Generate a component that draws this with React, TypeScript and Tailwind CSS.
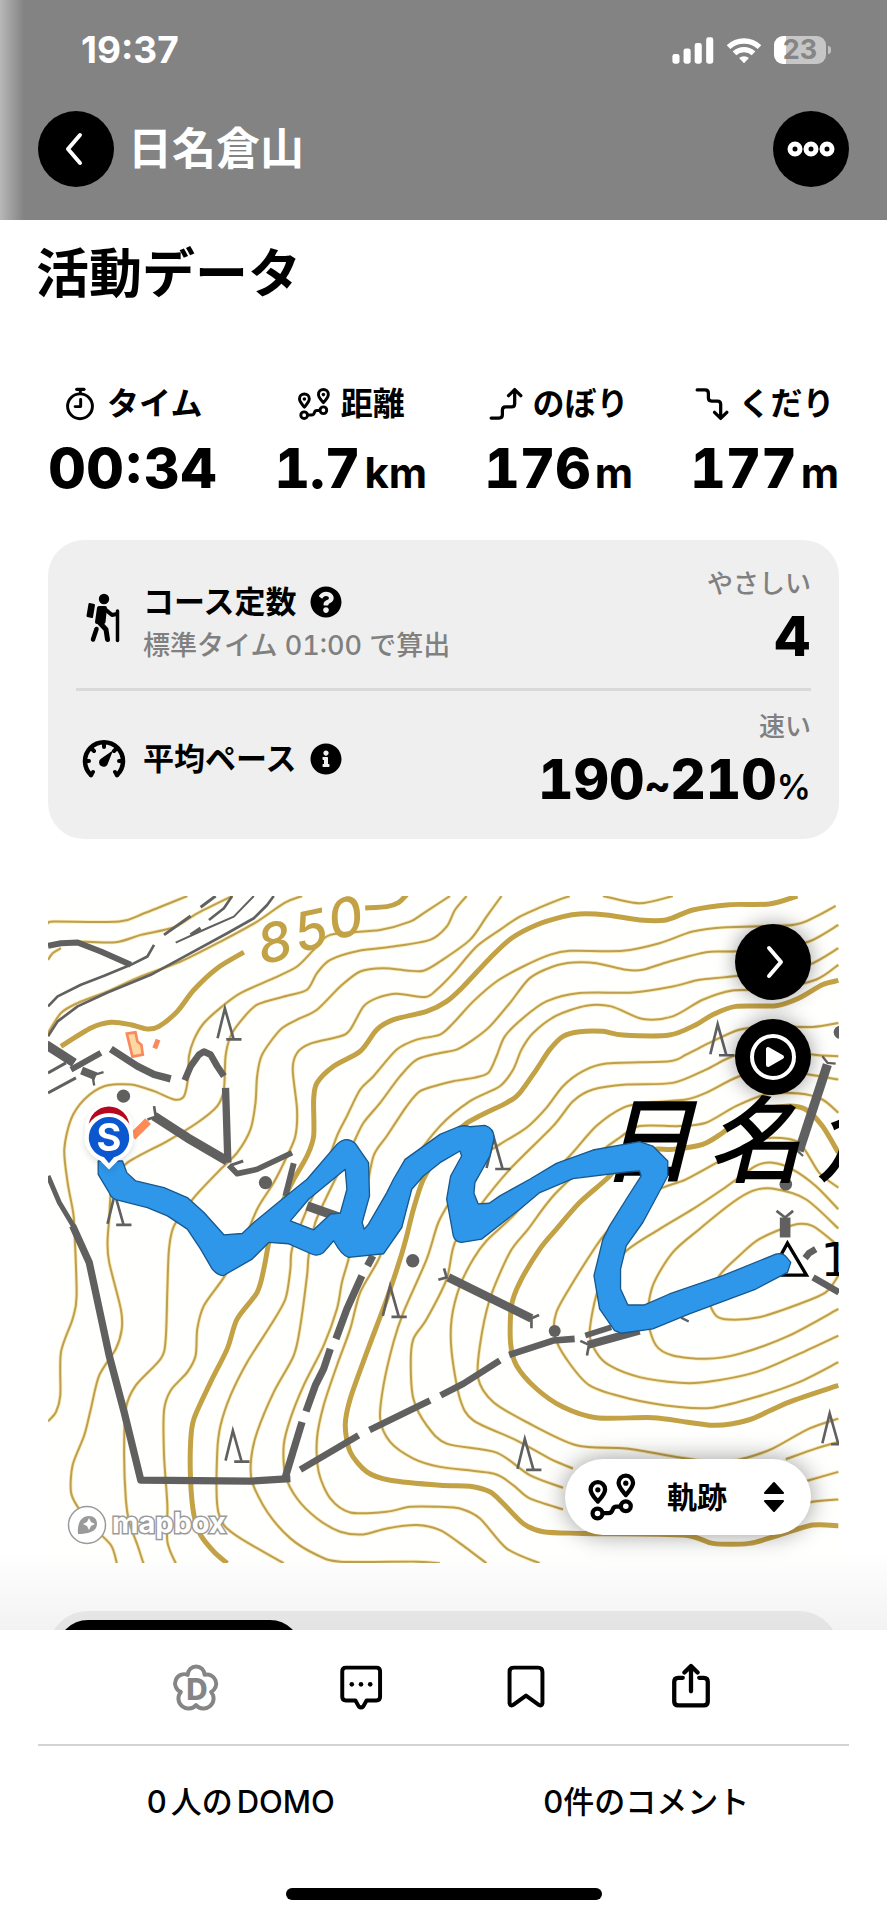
import type { ReactNode } from "react";
import { FaInfoCircle, FaQuestionCircle } from "react-icons/fa";

/* ---------- Map data ---------- */

const THIN_CONTOURS = [
  "21,100 40,95 235,95 310,70 440,18",
  "110,155 225,157 300,135 400,112 470,70 575,18",
  "21,210 35,190 60,175",
  "21,430 60,370 110,340 200,305 300,260 420,215 540,155 650,95 730,40 785,18",
  "1280,18 1245,60 1220,110 1170,150 1060,170 960,182 870,210 830,250 800,300 740,318 650,345 600,395 570,440 555,500 550,600 530,650 470,700 380,755 260,820 215,880 205,990 200,1060 205,1120 240,1260 243,1320 225,1380 175,1460 150,1560 130,1640 95,1730 90,1810 110,1855 150,1910 210,1970 228,2025",
  "1230,18 1150,70 1110,95 1020,120 870,135 820,180 770,230 700,265 600,310 545,350 490,400 460,450 445,500 443,560 430,620 400,630 340,605 270,585 190,590 130,630 90,690 70,780 80,880 95,960 100,1010 107,1220 95,1290 60,1390 58,1520 45,1570 21,1598",
  "1385,18 1340,80 1290,150 1200,215 1150,243 1100,242 1030,235 960,245 900,290 830,360 770,390 720,420 665,495 650,560 645,640 630,720 590,790 540,840 460,925 400,1010 385,1080 380,1200 375,1350 360,1410 285,1490 255,1560 250,1700 255,1830 265,1900 290,1970 308,2025",
  "1590,18 1530,40 1440,80 1380,120 1310,170 1240,250 1190,300 1155,322 1070,312 1010,325 970,350 930,420 900,440 810,462 770,490 757,540 770,660 765,740 740,800 700,880 650,960 600,1080 548,1168 490,1250 470,1320 465,1400 440,1450 390,1505 370,1565 370,1700 380,1850 380,1960 405,2025",
  "1690,18 1800,40 1900,18",
  "2390,48 2330,80 2260,105 2060,112 1960,125 1860,160 1750,183 1590,183 1530,195 1450,230 1370,275 1300,335 1240,400 1200,435 1130,450 1070,480 1000,560 960,600 920,680 890,740 850,850 800,960 755,1080 750,1140 735,1230 690,1310 620,1420 570,1520 540,1610 530,1690 530,1850 550,1910 600,1950 730,2025",
  "2398,105 2310,155 2200,178 2070,185 2000,187 1890,215 1810,240 1760,240 1670,220 1600,218 1540,230 1470,265 1410,340 1350,410 1300,450 1250,480 1200,490 1130,510 1080,560 1020,640 970,700 940,760 870,900 825,1000 805,1100 800,1160 780,1310 760,1400 700,1510 650,1630 632,1710 635,1780 680,1870 750,1950 830,2000 900,2020 1130,2020 1200,2025",
  "2398,175 2310,225 2200,245 2060,262 1980,270 1900,290 1780,308 1620,310 1520,335 1450,385 1395,440 1370,500 1345,550 1300,565 1240,575 1200,585 1140,605 1100,650 1040,740 1000,800 975,920 940,1040 925,1110 905,1180 890,1260 850,1370 790,1490 750,1590 730,1670 735,1760 770,1830 830,1890 900,1930 970,1938 1040,1920 1130,1910 1200,1925 1260,1965 1340,2025",
  "2398,225 2330,270 2200,300 2080,302 1990,330 1900,380 1810,388 1715,350 1640,348 1550,378 1480,430 1445,480 1420,540 1380,590 1290,635 1200,710 1110,830 1060,960 1020,1100 960,1210 930,1320 890,1430 850,1550 830,1650 835,1750 870,1830 930,1872 1040,1870 1110,1855 1200,1855 1260,1860 1320,1890 1400,1980 1500,2025",
  "2398,400 2320,412 2200,410 2100,420 2010,460 1940,495 1890,515 1700,522 1630,545 1570,590 1520,655 1460,715 1380,765 1300,820 1240,920 1195,1000 1160,1110 1090,1270 1060,1360 1030,1490 1020,1590 1050,1660 1120,1710 1200,1735 1360,1755 1420,1790 1470,1830 1570,1863",
  "2398,500 2320,495 2200,470 2080,500 2000,540 1900,580 1760,585 1660,600 1600,635 1540,710 1410,840 1320,950 1245,1060 1220,1170 1160,1290 1120,1350 1112,1420 1120,1530 1160,1610 1220,1665 1370,1692 1470,1760 1570,1798",
  "2398,570 2310,555 2200,540 2100,560 2000,610 1940,630 1820,640 1750,655 1670,710 1590,800 1500,890 1420,980 1340,1055 1300,1110 1260,1190 1235,1290 1235,1390 1260,1530 1300,1595 1430,1655 1530,1710 1600,1740",
  "2398,670 2350,630 2280,612 2180,615 2090,650 2000,700 1920,710 1800,710 1740,745 1680,790 1545,915 1465,1020 1410,1090 1350,1230 1320,1370 1315,1470 1360,1540 1460,1600 1610,1670 1760,1680 1930,1708 2040,1722 2120,1708 2200,1680 2310,1620 2398,1590",
  "2398,895 2340,850 2280,760 2200,745 2140,760 2050,810 1940,870 1870,895 1780,940 1700,1030 1670,1070 1600,1180 1550,1270 1545,1340 1580,1410 1650,1490 1770,1530 1920,1555 2020,1557 2150,1525 2280,1480 2398,1420",
  "2398,960 2330,890 2260,840 2200,820 2150,830 2050,900 1960,960 1860,1020 1755,1090 1680,1190 1650,1330 1670,1390 1710,1430 1800,1465 1920,1482 2000,1480 2150,1450 2280,1395 2398,1340",
  "2398,1018 2300,930 2200,898 2140,905 2080,940 1980,1020 1900,1090 1840,1190 1825,1290 1850,1370 1900,1400 2000,1410 2100,1395 2250,1340 2398,1260",
  "2398,1070 2320,1010 2260,1008 2160,1050 2100,1100 2040,1160 2010,1230 2030,1280 2070,1292 2160,1285 2280,1245 2360,1210 2398,1160",
  "2398,1660 2330,1680 2240,1712",
  "2398,1750 2310,1775 2220,1800",
  "2398,1833 2320,1840 2220,1870",
];

const THICK_CONTOURS = [
  "60,470 150,415 210,398 270,405 320,418 355,410 410,365 460,300 530,235 610,187",
  "975,54 1040,50 1075,38 1100,14",
  "2275,18 2190,42 2070,44 1960,60 1880,90 1800,90 1700,75 1620,72 1570,80 1490,105 1415,145 1350,205 1270,290 1220,335 1160,365 1060,390 1010,420 960,485 880,530 830,580 820,630 820,740 800,800 760,870 730,930 700,1000 685,1060 670,1140 650,1210 590,1290 560,1380 510,1480 460,1590 450,1660 450,1780 460,1880 480,1940 520,1990 560,2025",
  "2398,272 2350,285 2280,325 2210,348 2090,350 2020,375 1970,405 1890,436 1750,436 1690,425 1620,426 1570,440 1530,480 1490,540 1440,610 1400,640 1275,705 1200,790 1150,870 1120,960 1100,1040 1080,1110 1040,1230 980,1390 930,1530 915,1610 930,1690 980,1750 1050,1775 1200,1790 1290,1793 1350,1810 1390,1845 1450,1905 1510,1930 1630,1935 1930,1940 2020,1965 2130,1965 2220,1940 2320,1910 2398,1912",
  "2398,790 2350,710 2300,660 2240,650 2130,670 2050,730 1990,765 1900,780 1840,780 1760,810 1700,870 1620,940 1550,1020 1500,1080 1440,1180 1415,1250 1412,1360 1430,1430 1490,1500 1570,1555 1670,1587 1840,1587 1940,1600 2020,1610 2080,1605 2140,1590 2250,1540 2398,1490",
];

const ROADS: [number, string][] = [
  [8, "21,350 50,320 120,285 190,258 270,225 320,200 340,165"],
  [8, "21,440 50,395 110,350 200,308 330,255 450,190 560,130 640,85 680,45 700,18"],
  [6, "405,158 500,115 580,80 640,18"],
  [10, "450,135 480,115"],
  [9, "370,135 450,78"],
  [9, "480,52 525,18"],
  [8, "505,90 550,55 575,18"],
  [18, "21,168 60,160 110,158 180,185 270,225"],
  [28, "15,465 100,520"],
  [18, "90,540 180,490"],
  [9, "21,550 75,520"],
  [9, "21,610 105,565"],
  [24, "122,543 165,560"],
  [7, "160,556 188,548"],
  [7, "155,560 160,588"],
  [22, "210,478 290,530 340,555 390,568"],
  [20, "432,572 450,530 475,495 490,486 510,495 530,530 550,560"],
  [22, "555,595 562,820"],
  [28, "340,680 440,745 560,815"],
  [8, "340,650 345,682 320,690"],
  [17, "565,828 590,853 650,840 755,790"],
  [9, "570,828 608,815"],
  [18, "760,822 735,920"],
  [28, "800,950 900,985"],
  [15, "21,860 55,940 100,1015"],
  [22, "95,1010 145,1120 205,1400 250,1570 300,1775 630,1778 750,1770"],
  [22, "735,1765 785,1600"],
  [22, "797,1568 825,1490 850,1440 870,1380"],
  [22, "887,1350 920,1260 965,1160"],
  [22, "982,1130 998,1100"],
  [20, "780,1743 955,1640"],
  [20, "988,1624 1170,1535"],
  [20, "1202,1520 1270,1485 1380,1415"],
  [20, "1408,1398 1540,1355 1605,1350"],
  [26, "1225,1165 1475,1288"],
  [8, "1195,1172 1220,1165 1212,1138"],
  [8, "1498,1278 1475,1288 1475,1318"],
  [17, "1637,1340 1715,1315"],
  [24, "1645,1368 1800,1325"],
  [8, "1622,1356 1648,1368 1642,1400"],
  [7, "1925,1286 1948,1298"],
  [28, "2365,525 2280,785"],
  [7, "2350,500 2366,520 2390,522"],
  [7, "2270,780 2292,800"],
  [32, "2238,985 2238,1045"],
  [8, "2212,965 2238,985 2262,965"],
  [20, "2298,1107 2310,1092 2330,1080"],
  [20, "2322,1165 2400,1210"],
];

const CONIFERS: [number, number][] = [
  [553, 350],
  [222, 908],
  [2035, 398],
  [1362, 740],
  [1050, 1185],
  [577, 1620],
  [1455, 1645],
  [2372, 1568],
];

const ROCKS: [number, number, number][] = [
  [248, 620, 20],
  [675, 880, 20],
  [1118, 1115, 20],
  [2240, 885, 19],
  [2404, 428, 20],
  [1545, 1326, 18],
];

const TRACK =
  "M172,815 L245,815 L258,850 L285,875 L370,895 L440,925 L490,970 L550,1037 L605,1033 L640,1000 L725,930 L800,870 L890,765 Q918,738 945,762 L985,820 L988,920 L966,1000 L972,1020 L985,1005 L1040,910 L1060,870 L1095,810 L1200,735 L1255,712 Q1275,706 1290,712 L1335,708 Q1365,718 1362,750 L1350,800 L1305,880 L1302,912 L1315,944 L1348,942 L1380,920 L1470,870 L1550,822 L1660,782 L1800,757 L1840,770 L1885,815 L1885,860 L1810,1000 L1760,1070 L1743,1140 L1743,1200 L1765,1248 L1815,1248 L1890,1215 L2050,1160 L2210,1095 Q2230,1090 2240,1102 L2255,1120 L2245,1150 L2150,1200 L1950,1275 L1840,1320 L1745,1333 L1725,1325 L1680,1260 L1663,1160 L1690,1050 L1710,1010 L1760,930 L1805,860 L1800,845 L1760,848 L1600,868 L1500,910 L1440,960 L1370,1015 L1325,1050 L1265,1060 Q1245,1058 1240,1040 L1220,930 L1232,860 L1265,800 L1260,785 L1200,820 L1150,860 L1115,900 L1085,1015 L1030,1094 L925,1105 Q905,1100 880,1055 L850,1090 Q830,1104 812,1094 L745,1064 L685,1060 L635,1110 L548,1160 Q530,1158 515,1140 L480,1080 L440,1020 L380,980 L320,955 L240,935 Q210,930 205,910 L172,855 Z M915,840 L920,900 L900,972 L870,975 L820,1022 L750,995 L805,930 Z";

/** Turns a list of "x,y" pairs into a smooth Catmull-Rom path. */
function smooth(list: string): string {
  const p = list.split(" ").map((s) => s.split(",").map(Number));
  let d = `M${p[0][0]},${p[0][1]}`;
  for (let i = 0; i < p.length - 1; i++) {
    const a = p[i - 1] ?? p[i];
    const b = p[i];
    const c = p[i + 1];
    const e = p[i + 2] ?? c;
    const k = 7;
    d += `C${b[0] + (c[0] - a[0]) / k},${b[1] + (c[1] - a[1]) / k} ${c[0] - (e[0] - b[0]) / k},${c[1] - (e[1] - b[1]) / k} ${c[0]},${c[1]}`;
  }
  return d;
}

function TopoMap() {
  return (
    <svg viewBox="21 18 2379 2007" className="block h-full w-full" role="img" aria-label="日名倉山">
      <rect x="21" y="18" width="2379" height="2007" fill="#fffffe" />
      <g fill="none">
        {THIN_CONTOURS.map((c) => (
          <path key={c} d={smooth(c)} stroke="#fbe9b0" strokeWidth="11" />
        ))}
        {THIN_CONTOURS.map((c) => (
          <path key={c} d={smooth(c)} stroke="#bd9f52" strokeWidth="6" />
        ))}
        {THICK_CONTOURS.map((c) => (
          <path key={c} d={smooth(c)} stroke="#c3a145" strokeWidth="15" />
        ))}
      </g>
      <g fill="#c3a145" fontSize="162" fontWeight="500" fontStyle="italic" className="font-[Inter]">
        <text transform="translate(664 224) rotate(-12)">8</text>
        <text transform="translate(774 188) rotate(-12)">5</text>
        <text transform="translate(876 150) rotate(-12)">0</text>
      </g>
      <path d="M258,432 L284,428 L290,456 L302,466 L306,495 L275,501 Z" fill="#fcd9a0" stroke="#f9895e" strokeWidth="8" />
      <path d="M342,476 L352,450" stroke="#f9895e" strokeWidth="15" />
      <path d="M275,742 L322,695" stroke="#ff8a55" strokeWidth="24" />
      <g fill="none" stroke="#606060">
        {ROADS.map(([w, pts]) => (
          <polyline key={pts} points={pts} strokeWidth={w} strokeLinejoin="round" />
        ))}
        {CONIFERS.map(([x, y]) => (
          <path
            key={x}
            d={`M${x - 22},${y + 96} L${x},${y + 6} L${x + 26},${y + 98} M${x + 4},${y + 99} H${x + 50}`}
            strokeWidth="8"
          />
        ))}
      </g>
      {ROCKS.map(([x, y, r]) => (
        <circle key={x} cx={x} cy={y} r={r} fill="#606060" />
      ))}
      <g fontSize="284" fontStyle="italic" fontWeight="500" fill="#000" className="font-['Noto_Sans_CJK_JP']">
        <text x="1680" y="858">日</text>
        <text x="2004" y="858">名</text>
        <text x="2328" y="858">倉</text>
      </g>
      <text x="2344" y="1160" fontSize="140" fill="#000" className="font-['DejaVu_Sans']">1</text>
      <path d="M2245,1062 L2302,1158 L2192,1158 Z" fill="#fff" stroke="#000" strokeWidth="10" />
      <path d={TRACK} fill="#2e97ea" fillRule="evenodd" stroke="#17588f" strokeWidth="4" strokeLinejoin="round" />
    </svg>
  );
}

function StartPin() {
  return (
    <svg viewBox="0 0 54 68" className="h-[68px] w-[54px] drop-shadow-md" aria-label="スタート地点">
      <circle cx="27" cy="25" r="24" fill="#fff" />
      <circle cx="27" cy="24" r="20.500" fill="#b5081c" />
      <path d="M27 10 a24.500 24.500 0 0 1 24.500 24.500 c0 12-8 19-15.500 23 l-9 9 -9-9 C10.500 53.500 2.500 46.500 2.500 34.500 A24.500 24.500 0 0 1 27 10z" fill="#fff" />
      <path d="M27 14a20.500 20.500 0 0 1 5 40.300l-5 6-5-6a20.500 20.500 0 0 1 5-40.300z" fill="#0a57cf" />
      <text x="27" y="48" textAnchor="middle" fontSize="38" fontWeight="700" fill="#fff" className="font-[Inter]">S</text>
    </svg>
  );
}

/* ---------- Icons ---------- */

function RouteIcon({ className }: { className: string }) {
  return (
    <svg viewBox="436 762 150 152" className={className} fill="none" stroke="currentColor" strokeWidth="13" strokeLinejoin="round" aria-hidden="true">
      <path d="M468 852 C456 838 446 828 446 815 A22 22 0 0 1 490 815 C490 828 480 838 468 852Z" />
      <path d="M553 832 C541 818 531 808 531 795 A22 22 0 0 1 575 795 C575 808 565 818 553 832Z" />
      <circle cx="468" cy="816" r="8" fill="currentColor" stroke="none" />
      <circle cx="553" cy="796" r="8" fill="currentColor" stroke="none" />
      <circle cx="467" cy="888" r="15" />
      <circle cx="553" cy="866" r="15" />
      <path d="M484 887 H500 C520 887 506 867 524 867 H537" />
    </svg>
  );
}

function StopwatchIcon({ className }: { className: string }) {
  return (
    <svg viewBox="28 30 100 104" className={className} fill="none" stroke="currentColor" strokeWidth="9" strokeLinecap="round" strokeLinejoin="round" aria-hidden="true">
      <circle cx="78" cy="89" r="38" />
      <path d="M68 37 H90" strokeWidth="10" />
      <path d="M79 40 V50 M80 68 V90 H63" />
    </svg>
  );
}

function ClimbIcon({ className }: { className: string }) {
  return (
    <svg viewBox="0 0 94 94" className={className} fill="none" stroke="currentColor" strokeWidth="9" strokeLinecap="round" strokeLinejoin="round" aria-hidden="true">
      <path d="M6 86 H28 Q37 86 37 77 V64 Q37 55 46 55 H62 Q71 55 71 46 V8 M54 24 L71 7 L88 24" />
    </svg>
  );
}

function DescendIcon({ className }: { className: string }) {
  return (
    <svg viewBox="0 0 94 94" className={className} fill="none" stroke="currentColor" strokeWidth="9" strokeLinecap="round" strokeLinejoin="round" aria-hidden="true">
      <path d="M6 8 H28 Q37 8 37 17 V30 Q37 39 46 39 H62 Q71 39 71 48 V86 M54 70 L71 87 L88 70" />
    </svg>
  );
}

function HikerIcon({ className }: { className: string }) {
  return (
    <svg viewBox="0 0 36 50" className={className} fill="none" stroke="currentColor" strokeLinecap="round" strokeLinejoin="round" aria-hidden="true">
      <circle cx="18" cy="6" r="5.200" fill="currentColor" stroke="none" />
      <path d="M3.500 11 L8 12 L6 24 L1.500 23 Z" fill="currentColor" strokeWidth="2" />
      <path d="M13 15 L19 15 L17.500 29 L11 29 Z" fill="currentColor" strokeWidth="4" />
      <path d="M20 17 L26 22 L31 21" strokeWidth="4" />
      <path d="M31.500 18 V47.500" strokeWidth="3.500" />
      <path d="M13 29 L20 36.500 L21.500 46.500" strokeWidth="5" />
      <path d="M10.500 36 L7 46.500" strokeWidth="4.500" />
    </svg>
  );
}

function GaugeIcon({ className }: { className: string }) {
  return (
    <svg viewBox="0 0 44 40" className={className} fill="none" stroke="currentColor" strokeLinecap="round" aria-hidden="true">
      <path d="M9 36 A19 19 0 1 1 35 36" strokeWidth="4.500" />
      <path d="M22 4 V8 M9 9 L12 12 M35 9 L32 12 M3 22 H7 M41 22 H37 M9 36 L11 33 M35 36 L33 33" strokeWidth="4" />
      <path d="M29 14 L25 24 A3.500 3.500 0 1 1 19.500 20.500 Z" fill="currentColor" strokeWidth="2" />
    </svg>
  );
}

function SignalIcon() {
  return (
    <svg viewBox="95 50 124 80" className="h-[27px] w-[42px]" fill="#fff" aria-hidden="true">
      <rect x="96" y="100" width="21" height="29" rx="7" />
      <rect x="129" y="84" width="21" height="45" rx="7" />
      <rect x="162" y="68" width="21" height="61" rx="7" />
      <rect x="196" y="51" width="21" height="78" rx="7" />
    </svg>
  );
}

function WifiIcon() {
  return (
    <svg viewBox="254 49 108 82" className="h-[27px] w-9" aria-hidden="true">
      <g fill="none" stroke="#fff" strokeWidth="16">
        <path d="M261 80 A68 68 0 0 1 355 80" />
        <path d="M279 99 A42 42 0 0 1 337 99" />
      </g>
      <path d="M308 129 L293 113 A22 22 0 0 1 323 113 Z" fill="#fff" />
    </svg>
  );
}

function DomoIcon() {
  return (
    <svg viewBox="36 186 146 146" className="size-12" aria-hidden="true">
      <path
        d="M84 222 A25.500 25.500 0 0 1 135 222 A28 28 0 0 1 155 274 A29 29 0 0 1 109 314 A29 29 0 0 1 63 274 A28 28 0 0 1 84 222Z"
        fill="none" stroke="#858585" strokeWidth="12" strokeLinejoin="round"
      />
      <text x="112" y="298" textAnchor="middle" fontSize="90" fontWeight="800" fill="#858585" className="font-[Inter]">D</text>
    </svg>
  );
}

function CommentIcon() {
  return (
    <svg viewBox="530 188 146 146" className="size-12" fill="none" stroke="#000" strokeWidth="12" strokeLinejoin="round" aria-hidden="true">
      <path d="M557 202 H650 Q661 202 661 213 V291 Q661 302 650 302 H620 L610 320 Q603 326 596 320 L586 302 H557 Q546 302 546 291 V213 Q546 202 557 202Z" />
      <g fill="#000" stroke="none">
        <circle cx="575" cy="253" r="7" />
        <circle cx="603" cy="253" r="7" />
        <circle cx="631" cy="253" r="7" />
      </g>
    </svg>
  );
}

function BookmarkIcon() {
  return (
    <svg viewBox="1025 188 146 146" className="size-12" fill="none" stroke="#000" strokeWidth="12" strokeLinejoin="round" aria-hidden="true">
      <path d="M1061 202 H1135 Q1148 202 1148 215 V311 Q1146 320 1138 316 L1098 287 L1058 316 Q1050 320 1048 311 V215 Q1048 202 1061 202Z" />
    </svg>
  );
}

function ShareIcon() {
  return (
    <svg viewBox="0 0 146 146" className="size-12" fill="none" stroke="#000" strokeWidth="13" strokeLinecap="round" strokeLinejoin="round" aria-hidden="true">
      <path d="M48 45 H34 Q22 45 22 57 V117 Q22 129 34 129 H112 Q124 129 124 117 V57 Q124 45 112 45 H98" />
      <path d="M73 86 V12 M53 29 L73 9 L93 29" />
    </svg>
  );
}

/* ---------- Parts ---------- */

function Stat({ icon, label, value, unit }: { icon: ReactNode; label: string; value: string; unit?: string }) {
  return (
    <div className="flex flex-col items-center gap-3">
      <dt className="flex h-10 items-center gap-[10px] text-[32px] font-bold leading-10">
        {icon}
        {label}
      </dt>
      <dd className="flex items-baseline gap-1 text-[55px] font-extrabold leading-[64px]">
        {unit ? <span className="tabular-nums">{value}</span> : value}
        {unit && <span className="text-[42px] font-bold leading-none">{unit}</span>}
      </dd>
    </div>
  );
}

const roundButton = "flex size-[76px] items-center justify-center rounded-full bg-black text-white";

export default function App() {
  return (
    <div className="flex h-screen flex-col overflow-hidden bg-white font-[Inter,'Noto_Sans_CJK_JP',sans-serif] text-black">
      <header className="relative bg-[#838383] px-[38px] pb-[33px] pt-[30px] text-white">
        <div className="absolute inset-y-0 left-0 w-6 bg-linear-to-r from-[#b8b8b8] to-[#838383]" />
        <div className="flex h-10 items-center justify-between pl-[43px] pr-[18px]">
          <span className="text-[37px] font-bold leading-10">19:37</span>
          <div className="flex items-center gap-3">
            <SignalIcon />
            <WifiIcon />
            <div className="flex items-center gap-[2px]">
              <div className="flex h-7 w-[52px] items-center justify-center rounded-[9px] bg-linear-to-r from-white from-[23%] to-[#c6c6c6] to-[23%] text-[27px] font-bold leading-7 text-[#858585]">
                23
              </div>
              <div className="h-2 w-[3px] rounded-r-full bg-[#c0c0c0]" />
            </div>
          </div>
        </div>
        <div className="mt-[41px] flex items-center">
          <button type="button" aria-label="戻る" className={roundButton}>
            <svg viewBox="0 0 24 34" className="h-[34px] w-6" fill="none" stroke="#fff" strokeWidth="4" strokeLinecap="round" strokeLinejoin="round">
              <path d="M16 3 L4 17 L16 31" />
            </svg>
          </button>
          <h1 className="ml-[14px] flex-1 text-[44px] font-bold leading-[60px]">日名倉山</h1>
          <button type="button" aria-label="メニュー" className={roundButton}>
            <svg viewBox="0 0 48 16" className="h-4 w-12" fill="none" stroke="#fff" strokeWidth="5">
              <circle cx="8" cy="8" r="5" />
              <circle cx="24" cy="8" r="5" />
              <circle cx="40" cy="8" r="5" />
            </svg>
          </button>
        </div>
      </header>

      <main className="relative min-h-0 flex-1 overflow-hidden px-12 pt-[22px]">
        <h2 className="-ml-3 text-[53px] font-bold leading-[64px]">活動データ</h2>

        <dl className="mt-[78px] flex justify-between">
          <Stat icon={<StopwatchIcon className="h-[34px] w-[34px]" />} label="タイム" value="00:34" />
          <Stat icon={<RouteIcon className="size-[34px]" />} label="距離" value="1.7" unit="km" />
          <Stat icon={<ClimbIcon className="size-[34px]" />} label="のぼり" value="176" unit="m" />
          <Stat icon={<DescendIcon className="size-[34px]" />} label="くだり" value="177" unit="m" />
        </dl>

        <section className="mt-10 rounded-[36px] bg-[#efefef] px-7">
          <div className="flex items-center pb-[22px] pt-[26px]">
            <div className="flex w-[67px] justify-center pr-3 pt-1">
              <HikerIcon className="h-[50px] w-9" />
            </div>
            <div className="flex-1 pt-3">
              <div className="flex h-12 items-center gap-[14px] text-[31px] font-bold leading-10">
                コース定数
                <button type="button" aria-label="コース定数について">
                  <FaQuestionCircle className="size-8" />
                </button>
              </div>
              <p className="text-[27px] font-medium leading-10 tabular-nums text-[#808080]">標準タイム 01:00 で算出</p>
            </div>
            <div className="flex flex-col items-end gap-2">
              <span className="text-[26px] font-medium leading-8 text-[#808080]">やさしい</span>
              <span className="text-[55px] font-extrabold leading-[56px]">4</span>
            </div>
          </div>
          <hr className="border-t-[3px] border-[#d9d9d9]" />
          <div className="flex items-center pb-8 pt-5">
            <div className="flex w-[67px] justify-center pr-3">
              <GaugeIcon className="h-10 w-11" />
            </div>
            <div className="flex h-12 flex-1 items-center gap-[14px] text-[31px] font-bold leading-10">
              平均ペース
              <button type="button" aria-label="平均ペースについて">
                <FaInfoCircle className="size-8" />
              </button>
            </div>
            <div className="flex flex-col items-end gap-2">
              <span className="text-[26px] font-medium leading-8 text-[#808080]">速い</span>
              <span className="flex items-baseline text-[55px] font-extrabold leading-[56px] tabular-nums">
                190
                <span className="text-[40px] leading-none">~</span>
                210
                <span className="text-[34px] font-semibold leading-none">%</span>
              </span>
            </div>
          </div>
        </section>

        <section className="relative mt-[57px] aspect-[793/669] overflow-hidden">
          <TopoMap />
          <div className="absolute left-[34px] top-[207px]">
            <StartPin />
          </div>
          <button type="button" aria-label="次へ" className={`${roundButton} absolute right-7 top-7 shadow-[0_0_20px_rgba(0,0,0,0.4)]`}>
            <svg viewBox="0 0 24 34" className="h-[34px] w-6" fill="none" stroke="#fff" strokeWidth="4" strokeLinecap="round" strokeLinejoin="round">
              <path d="M8 3 L20 17 L8 31" />
            </svg>
          </button>
          <button type="button" aria-label="再生" className={`${roundButton} absolute right-7 top-[123px] shadow-[0_0_20px_rgba(0,0,0,0.4)]`}>
            <svg viewBox="0 0 48 48" className="size-12" fill="none" stroke="#fff" strokeWidth="4" strokeLinejoin="round">
              <circle cx="24" cy="24" r="21" />
              <path d="M19 16 V32 L33 24 Z" fill="#fff" />
            </svg>
          </button>
          <div className="absolute bottom-[18px] left-[19px] flex items-center gap-1">
            <svg viewBox="0 0 40 40" className="size-10" aria-hidden="true">
              <circle cx="20" cy="20" r="18.500" fill="#fff" stroke="#9a9a9a" strokeWidth="1.500" />
              <path d="M11 29 C10 20 13 11 22 11 C27 11 30 14 30 19 C30 27 20 29 11 29Z" fill="#9a9a9a" />
              <path d="M22 13 L24 17 L28 19 L24 21 L22 25 L20 21 L16 19 L20 17Z" fill="#fff" />
            </svg>
            <svg viewBox="0 0 120 40" className="h-10 w-[120px]">
              <text x="1" y="28" fontSize="29" fontWeight="700" fill="#fff" stroke="#9a9a9a" strokeWidth="3" paintOrder="stroke" className="font-[Inter]">
                mapbox
              </text>
            </svg>
          </div>
          <button
            type="button"
            className="absolute bottom-7 right-7 flex h-[76px] items-center rounded-full bg-white pl-[22px] pr-[26px] text-[30px] font-bold shadow-[0_0_24px_rgba(0,0,0,0.4)]"
          >
            <RouteIcon className="size-[50px]" />
            <span className="ml-[30px] mr-9">軌跡</span>
            <svg viewBox="0 0 22 32" className="h-8 w-[22px]" fill="#000" stroke="#000" strokeWidth="2" strokeLinejoin="round" aria-hidden="true">
              <path d="M11 2 L20 12 H2 Z M11 30 L20 20 H2 Z" />
            </svg>
          </button>
        </section>

        <div className="mt-12 h-20 rounded-[40px] bg-[#efefef] p-[9px]">
          <div className="h-full w-[244px] rounded-[31px] bg-black" />
        </div>
        <div className="pointer-events-none absolute inset-x-0 bottom-0 h-20 bg-linear-to-t from-black/5 to-transparent" />
      </main>

      <footer className="relative bg-white px-[38px] pb-5">
        <div className="mx-[76px] grid h-[114px] grid-cols-4 place-items-center">
          <button type="button" aria-label="DOMO"><DomoIcon /></button>
          <button type="button" aria-label="コメント"><CommentIcon /></button>
          <button type="button" aria-label="ブックマーク"><BookmarkIcon /></button>
          <button type="button" aria-label="共有"><ShareIcon /></button>
        </div>
        <hr className="border-t-2 border-[#d4d4d4]" />
        <div className="grid grid-cols-2 place-items-center pt-9 text-[31px] font-medium leading-10">
          <a href="#domo" className="flex gap-1">
            <span>0</span>
            <span>人の</span>
            <span>DOMO</span>
          </a>
          <a href="#comments">0件のコメント</a>
        </div>
        <div className="mx-auto mt-[66px] h-3 w-[316px] rounded-full bg-black" />
      </footer>
    </div>
  );
}
